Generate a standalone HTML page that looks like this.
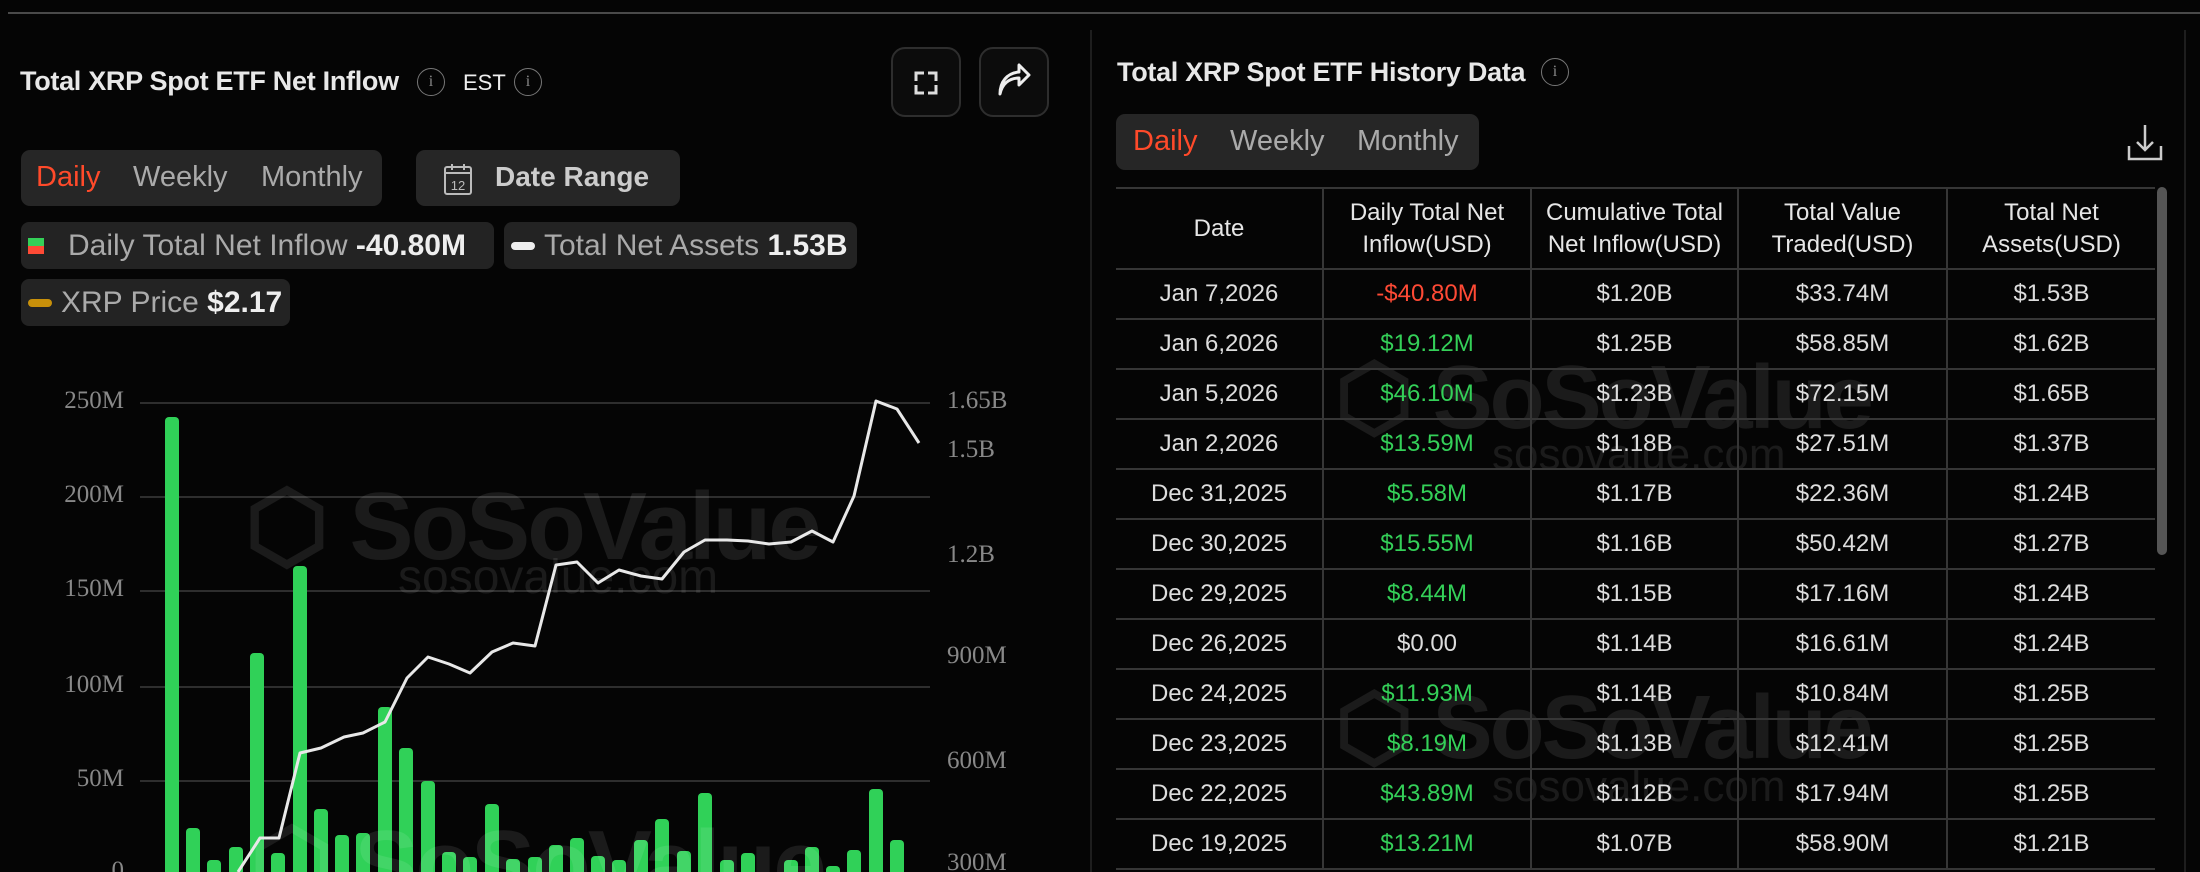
<!DOCTYPE html>
<html><head><meta charset="utf-8"><style>
*{margin:0;padding:0;box-sizing:border-box}
html,body{width:2200px;height:872px;overflow:hidden;background:#050505}
#w{position:relative;width:2200px;height:872px;overflow:hidden;background:#050505;font-family:"Liberation Sans",sans-serif;color:#ddd}
.a{position:absolute}
.topline{left:8px;top:12px;width:2192px;height:2px;background:#4a4a4a}
.vline{top:30px;width:2px;height:842px;background:#1e1e1e}
.title{font-size:27px;font-weight:bold;color:#e8e8e8;white-space:nowrap;letter-spacing:-0.3px}
.info{width:28px;height:28px;border:1.5px solid #777;border-radius:50%;color:#888;font-size:16px;text-align:center;line-height:25px;font-family:"Liberation Serif",serif}
.btn{width:70px;height:70px;border:2px solid #2e2e2e;border-radius:14px;background:#0c0c0c}
.seg{background:#262626;border-radius:9px;height:56px}
.seg span{position:absolute;top:11px;font-size:29px;color:#aaa}
.leg{background:#232323;border-radius:8px;height:47px;font-size:30px;color:#aaa;white-space:nowrap;line-height:47px}
.leg b{color:#eee}
.grid{left:140px;width:790px;height:2px;background:#2e2e2e}
.yl{font-family:"Liberation Serif",serif;font-size:25px;color:#888;width:90px}
.ylr{left:947px;font-family:"Liberation Serif",serif;font-size:25px;color:#888}
table{position:absolute;left:1116px;top:187px;width:1039px;border-collapse:collapse}
td,th{border:2px solid #363636;text-align:center;font-size:24px;color:#ddd;font-weight:normal;height:50px}
th{height:81px;line-height:32px;color:#e6e6e6}
tr td:first-child,tr th:first-child{border-left:none}
tr td:last-child,tr th:last-child{border-right:none}
.g{color:#34d058}.r{color:#ff4a35}
.wm{color:rgba(255,255,255,0.09);font-weight:bold;white-space:nowrap}
.clip{overflow:hidden}
</style></head><body><div id="w">
<div class="a topline"></div>
<div class="a vline" style="left:1090px"></div>
<div class="a vline" style="left:2184px"></div>

<div class="a title" style="left:20px;top:66px">Total XRP Spot ETF Net Inflow</div>
<div class="a info" style="left:417px;top:68px">i</div>
<div class="a" style="left:463px;top:70px;font-size:22px;color:#eee">EST</div>
<div class="a info" style="left:514px;top:68px">i</div>

<div class="a btn" style="left:891px;top:47px">
<svg width="66" height="66" viewBox="0 0 66 66"><path d="M23 32V24h8M35 24h8v8M43 36v8h-8M31 44h-8v-8" fill="none" stroke="#ddd" stroke-width="3"/></svg></div>
<div class="a btn" style="left:979px;top:47px">
<svg width="66" height="66" viewBox="0 0 66 66"><path d="M19 45c2-10 9-16 19-16v7l10-10-10-10v7c-12 1-19 10-19 22z" fill="none" stroke="#eee" stroke-width="3" stroke-linejoin="round"/></svg></div>

<div class="a seg" style="left:21px;top:150px;width:361px">
<span style="left:15px;color:#ff4a2a">Daily</span><span style="left:112px">Weekly</span><span style="left:240px">Monthly</span></div>
<div class="a seg" style="left:416px;top:150px;width:264px">
<svg class="a" style="left:26px;top:12px" width="34" height="34" viewBox="0 0 34 34"><rect x="3" y="5" width="26" height="27" rx="2" fill="none" stroke="#bbb" stroke-width="2"/><path d="M3 11h26M10 2v6M22 2v6" stroke="#bbb" stroke-width="2"/><text x="16" y="28" font-size="13" fill="#bbb" text-anchor="middle" font-family="Liberation Sans">12</text></svg>
<span style="left:79px;font-weight:bold;color:#ccc;font-size:28px">Date Range</span></div>

<div class="a leg" style="left:21px;top:222px;width:473px">
<div class="a" style="left:7px;top:16px;width:16px;height:8px;background:#34d058"></div>
<div class="a" style="left:7px;top:24px;width:16px;height:8px;background:#ff4a35"></div>
<span class="a" style="left:47px">Daily Total Net Inflow <b>-40.80M</b></span></div>
<div class="a leg" style="left:504px;top:222px;width:353px">
<div class="a" style="left:7px;top:20px;width:24px;height:8px;border-radius:4px;background:#eee"></div>
<span class="a" style="left:40px">Total Net Assets <b>1.53B</b></span></div>
<div class="a leg" style="left:21px;top:279px;width:269px">
<div class="a" style="left:7px;top:20px;width:24px;height:8px;border-radius:4px;background:#c8900a"></div>
<span class="a" style="left:40px">XRP Price <b>$2.17</b></span></div>

<div class="a grid" style="top:402px"></div>
<div class="a grid" style="top:496px"></div>
<div class="a grid" style="top:590px"></div>
<div class="a grid" style="top:686px"></div>
<div class="a grid" style="top:780px"></div>
<div class="a yl" style="left:34px;top:387px;text-align:right">250M</div>
<div class="a yl" style="left:34px;top:481px;text-align:right">200M</div>
<div class="a yl" style="left:34px;top:575px;text-align:right">150M</div>
<div class="a yl" style="left:34px;top:671px;text-align:right">100M</div>
<div class="a yl" style="left:34px;top:765px;text-align:right">50M</div>
<div class="a yl clip" style="left:34px;top:857px;height:15px;text-align:right">0</div>
<div class="a ylr" style="top:387px">1.65B</div>
<div class="a ylr" style="top:436px">1.5B</div>
<div class="a ylr" style="top:541px">1.2B</div>
<div class="a ylr" style="top:642px">900M</div>
<div class="a ylr" style="top:747px">600M</div>
<div class="a ylr clip" style="top:849px;height:23px">300M</div>

<div class="a wm" style="left:245px;top:470px;font-size:96px;letter-spacing:-3px">⬡ SoSoValue</div>
<div class="a wm" style="left:398px;top:550px;font-size:48px;font-weight:normal">sosovalue.com</div>

<svg class="a" style="left:0;top:0" width="1090" height="872">
<g fill="#30d158">
<rect x="165" y="417" width="14" height="460" rx="4"/>
<rect x="186" y="828" width="14" height="60" rx="4"/>
<rect x="207" y="860" width="14" height="30" rx="4"/>
<rect x="229" y="847" width="14" height="40" rx="4"/>
<rect x="250" y="653" width="14" height="230" rx="4"/>
<rect x="271" y="853" width="14" height="40" rx="4"/>
<rect x="293" y="566" width="14" height="320" rx="4"/>
<rect x="314" y="809" width="14" height="70" rx="4"/>
<rect x="335" y="835" width="14" height="50" rx="4"/>
<rect x="356" y="833" width="14" height="50" rx="4"/>
<rect x="378" y="707" width="14" height="180" rx="4"/>
<rect x="399" y="748" width="14" height="140" rx="4"/>
<rect x="421" y="781" width="14" height="100" rx="4"/>
<rect x="442" y="852" width="14" height="40" rx="4"/>
<rect x="463" y="857" width="14" height="30" rx="4"/>
<rect x="485" y="804" width="14" height="80" rx="4"/>
<rect x="506" y="859" width="14" height="30" rx="4"/>
<rect x="528" y="857" width="14" height="30" rx="4"/>
<rect x="549" y="845" width="14" height="40" rx="4"/>
<rect x="570" y="838" width="14" height="50" rx="4"/>
<rect x="591" y="856" width="14" height="30" rx="4"/>
<rect x="612" y="860" width="14" height="30" rx="4"/>
<rect x="634" y="840" width="14" height="50" rx="4"/>
<rect x="655" y="819" width="14" height="60" rx="4"/>
<rect x="677" y="851" width="14" height="40" rx="4"/>
<rect x="698" y="793" width="14" height="90" rx="4"/>
<rect x="720" y="860" width="14" height="30" rx="4"/>
<rect x="741" y="853" width="14" height="30" rx="4"/>
<rect x="784" y="860" width="14" height="30" rx="4"/>
<rect x="805" y="847" width="14" height="40" rx="4"/>
<rect x="826" y="866" width="14" height="30" rx="4"/>
<rect x="847" y="850" width="14" height="40" rx="4"/>
<rect x="869" y="789" width="14" height="90" rx="4"/>
<rect x="890" y="840" width="14" height="50" rx="4"/>
</g>
<polyline fill="none" stroke="#e8e8e8" stroke-width="3" stroke-linejoin="round" points="238,872 260,838 279,838 300,753 321,748 344,737 363,733 385,722 407,678 428,657 449,664 470,673 492,652 513,643 535,646 556,565 577,562 598,583 619,570 641,576 662,579 684,552 705,540 727,540 748,541 769,544 791,542 812,531 833,542 854,496 876,401 897,409 919,443"/>
</svg>
<div class="a clip" style="left:250px;top:810px;width:700px;height:62px"><div class="wm" style="font-size:96px;letter-spacing:-3px;line-height:110px">⬡ SoSoValue</div></div>

<div class="a title" style="left:1117px;top:57px">Total XRP Spot ETF History Data</div>
<div class="a info" style="left:1541px;top:58px">i</div>
<div class="a seg" style="left:1116px;top:114px;width:363px">
<span style="left:17px;color:#ff4a2a">Daily</span><span style="left:114px">Weekly</span><span style="left:241px">Monthly</span></div>
<svg class="a" style="left:2126px;top:122px" width="38" height="40" viewBox="0 0 38 40"><path d="M19 3v25M11 20l8 8 8-8M3 24v13h32V24" fill="none" stroke="#ccc" stroke-width="2.5"/></svg>

<div class="a" style="left:2157px;top:187px;width:10px;height:368px;border-radius:5px;background:#555"></div>

<div class="a wm" style="left:1335px;top:345px;font-size:90px;letter-spacing:-3px">⬡ SoSoValue</div>
<div class="a wm" style="left:1492px;top:430px;font-size:44px;font-weight:normal">sosovalue.com</div>
<div class="a wm" style="left:1335px;top:675px;font-size:90px;letter-spacing:-3px">⬡ SoSoValue</div>
<div class="a wm" style="left:1492px;top:762px;font-size:44px;font-weight:normal">sosovalue.com</div>

<div class="a clip" style="left:0;top:0;width:2200px;height:872px">
<table>
<tr><th style="width:207px">Date</th><th style="width:208px">Daily Total Net<br>Inflow(USD)</th><th style="width:207px">Cumulative Total<br>Net Inflow(USD)</th><th style="width:209px">Total Value<br>Traded(USD)</th><th>Total Net<br>Assets(USD)</th></tr>
<tr><td>Jan 7,2026</td><td class="r">-$40.80M</td><td>$1.20B</td><td>$33.74M</td><td>$1.53B</td></tr>
<tr><td>Jan 6,2026</td><td class="g">$19.12M</td><td>$1.25B</td><td>$58.85M</td><td>$1.62B</td></tr>
<tr><td>Jan 5,2026</td><td class="g">$46.10M</td><td>$1.23B</td><td>$72.15M</td><td>$1.65B</td></tr>
<tr><td>Jan 2,2026</td><td class="g">$13.59M</td><td>$1.18B</td><td>$27.51M</td><td>$1.37B</td></tr>
<tr><td>Dec 31,2025</td><td class="g">$5.58M</td><td>$1.17B</td><td>$22.36M</td><td>$1.24B</td></tr>
<tr><td>Dec 30,2025</td><td class="g">$15.55M</td><td>$1.16B</td><td>$50.42M</td><td>$1.27B</td></tr>
<tr><td>Dec 29,2025</td><td class="g">$8.44M</td><td>$1.15B</td><td>$17.16M</td><td>$1.24B</td></tr>
<tr><td>Dec 26,2025</td><td>$0.00</td><td>$1.14B</td><td>$16.61M</td><td>$1.24B</td></tr>
<tr><td>Dec 24,2025</td><td class="g">$11.93M</td><td>$1.14B</td><td>$10.84M</td><td>$1.25B</td></tr>
<tr><td>Dec 23,2025</td><td class="g">$8.19M</td><td>$1.13B</td><td>$12.41M</td><td>$1.25B</td></tr>
<tr><td>Dec 22,2025</td><td class="g">$43.89M</td><td>$1.12B</td><td>$17.94M</td><td>$1.25B</td></tr>
<tr><td>Dec 19,2025</td><td class="g">$13.21M</td><td>$1.07B</td><td>$58.90M</td><td>$1.21B</td></tr>
</table>
</div>
</div></body></html>
